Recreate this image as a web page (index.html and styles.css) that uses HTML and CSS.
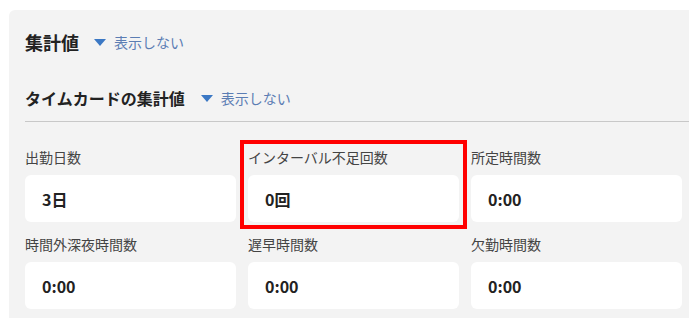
FILE: index.html
```html
<!DOCTYPE html>
<html lang="ja">
<head>
    <meta charset="UTF-8">
    <title>集計値</title>
    <link rel="stylesheet" href="styles.css">
</head>
<body>
    <div class="panel">
        <div class="section-head">
            <h2 class="title">集計値</h2>
            <button class="toggle">
                <svg class="caret" width="12" height="7" viewBox="0 0 12 7"><polygon points="0,0 12,0 6,7" fill="#3b78c4"/></svg>
                表示しない
            </button>
        </div>
        <div class="section-head sub">
            <h3 class="subtitle">タイムカードの集計値</h3>
            <button class="toggle">
                <svg class="caret" width="12" height="7" viewBox="0 0 12 7"><polygon points="0,0 12,0 6,7" fill="#3b78c4"/></svg>
                表示しない
            </button>
        </div>
        <div class="grid">
            <div class="cell">
                <div class="label">出勤日数</div>
                <div class="value">3日</div>
            </div>
            <div class="cell highlight">
                <div class="label">インターバル不足回数</div>
                <div class="value">0回</div>
            </div>
            <div class="cell">
                <div class="label">所定時間数</div>
                <div class="value">0:00</div>
            </div>
            <div class="cell">
                <div class="label">時間外深夜時間数</div>
                <div class="value">0:00</div>
            </div>
            <div class="cell">
                <div class="label">遅早時間数</div>
                <div class="value">0:00</div>
            </div>
            <div class="cell">
                <div class="label">欠勤時間数</div>
                <div class="value">0:00</div>
            </div>
        </div>
    </div>
</body>
</html>
```

FILE: styles.css
```css
body {
    margin: 0;
    background-color: #fff;
    font-family: "Noto Sans CJK JP", "Noto Sans", sans-serif;
    color: #222;
}
.panel {
    margin: 10px 0 0 9px;
    padding: 20px 0 0 16px;
    background-color: #f3f3f3;
    border-radius: 6px 0 0 0;
    height: 308px;
    box-sizing: border-box;
}
.section-head {
    display: flex;
    align-items: center;
    height: 24px;
}
.section-head.sub {
    margin-top: 32px;
    padding-bottom: 11px;
    border-bottom: 1px solid #c8c8c8;
}
.title {
    margin: 0;
    font-size: 18px;
    font-weight: bold;
    line-height: 24px;
}
.subtitle {
    margin: 0;
    font-size: 16px;
    font-weight: bold;
    line-height: 24px;
}
.toggle {
    display: flex;
    align-items: center;
    margin-left: 15px;
    padding: 0;
    border: none;
    background: none;
    font-family: inherit;
    font-size: 14px;
    color: #5b7db3;
    cursor: pointer;
}
.sub .toggle {
    margin-left: 16px;
}
.caret {
    margin-right: 8px;
}
.grid {
    display: grid;
    grid-template-columns: repeat(3, 1fr);
    column-gap: 12px;
    row-gap: 12px;
    padding: 25px 7px 0 0;
}
.cell {
    position: relative;
}
.label {
    font-size: 14px;
    line-height: 20px;
    color: #444;
    margin-bottom: 8px;
}
.value {
    display: flex;
    align-items: center;
    height: 47px;
    padding-left: 17px;
    background-color: #fff;
    border-radius: 6px;
    font-size: 16px;
    font-weight: bold;
    color: #222;
}
.highlight::after {
    content: "";
    position: absolute;
    top: -7px;
    right: -8px;
    bottom: -7px;
    left: -8px;
    border: 4px solid #ff0000;
}
```
